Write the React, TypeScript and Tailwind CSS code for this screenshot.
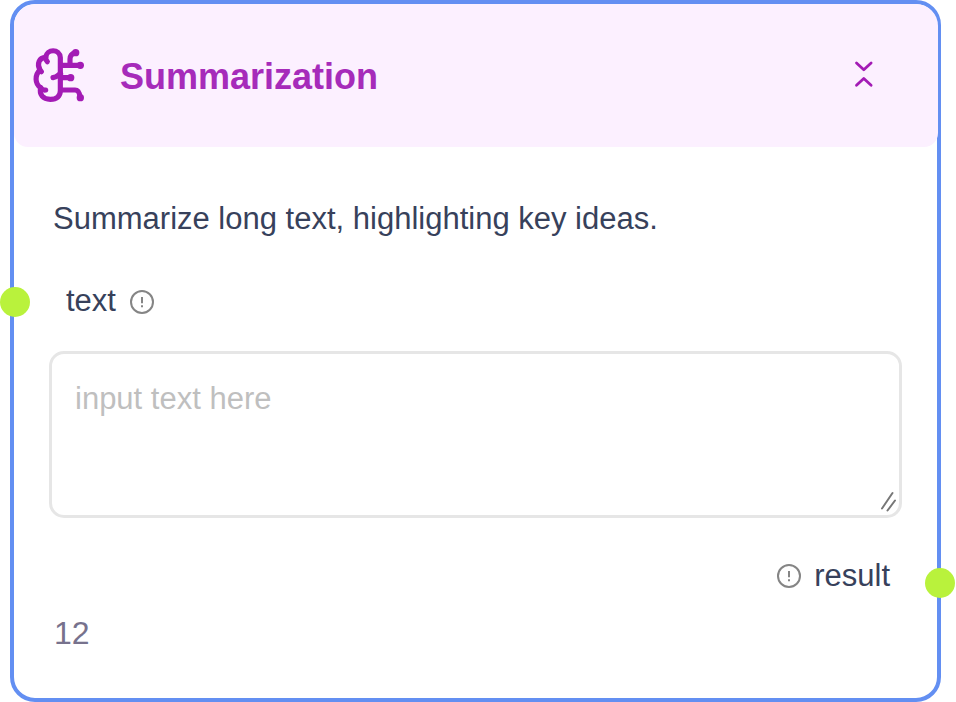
import React from "react";

function BrainIcon() {
  return (
    <svg width="54" height="58" viewBox="36 33 162 174" fill="none" stroke="#a31bb5" strokeWidth="15.5" strokeLinecap="round" strokeLinejoin="round" className="shrink-0">
      <path d="M121 65 C119 37 80 38 77 64 C57 65 50 83 60 102 C44 117 44 143 62 155 C57 176 69 190 91 190 C111 190 121 180 121 164 Z" />
      <path d="M77 62 C77 70 79 74 82 77 M60 102 L64 107 M62 155 C66 161 71 163 77 162" />
      <path d="M122 113 C116 114 113 123 99 125 M122 125 H151 M122 88 H181 M150 86 V69 C150 58 155 53 165 50 M122 162 H165 C174 162 178 167 180 183" />
      <g fill="#a31bb5" stroke="none">
        <circle cx="167" cy="50" r="11" />
        <circle cx="181" cy="88" r="11" />
        <circle cx="152" cy="125" r="11" />
        <circle cx="181" cy="185" r="11" />
      </g>
    </svg>
  );
}

function CollapseIcon() {
  return (
    <svg width="20" height="28" viewBox="0 0 20 28" fill="none" stroke="#a31bb5" strokeWidth="2.8" strokeLinecap="round" strokeLinejoin="round">
      <path d="M2.5 3 L9.8 9.7 L17.1 3 M2.5 25.2 L9.8 18.4 L17.1 25.2" />
    </svg>
  );
}

function InfoIcon() {
  return (
    <svg width="26" height="26" viewBox="0 0 26 26" fill="none" stroke="#858585" strokeWidth="2" className="shrink-0">
      <circle cx="13" cy="13" r="11" />
      <path d="M13 8 V14.2 M13 16.2 V18.2" />
    </svg>
  );
}

export default function App() {
  return (
    <div className="h-[702px] w-[956px] overflow-hidden bg-white pl-[10px] font-['Liberation_Sans',Arial,sans-serif] text-[#37415b]">
      <section className="relative h-[702px] w-[931px] rounded-[25px] border-4 border-[#638ff2] bg-white">
        <header className="flex h-[143px] w-[924px] items-start rounded-t-[22px] rounded-b-[14px] bg-[#fcf0ff] pl-[18px]">
          <div className="pt-[43px]"><BrainIcon /></div>
          <h2 className="ml-[34px] pt-[52px] text-[36px] leading-[42px] font-bold whitespace-nowrap text-[#a62bba]">Summarization</h2>
          <button aria-label="Collapse" className="mt-[56px] mr-[64px] ml-auto"><CollapseIcon /></button>
        </header>
        <div className="px-[35px]">
          <p className="pt-[54px] pl-1 text-[31px] leading-[36px] whitespace-nowrap">Summarize long text, highlighting key ideas.</p>
          <div className="mt-[46px] flex h-[36px] items-center gap-[13px] pl-[17px] text-[31px] leading-[36px]">
            <span>text</span>
            <span className="pt-[2px]"><InfoIcon /></span>
          </div>
          <div className="mt-[32px] flex h-[167px] w-[853px] items-start justify-between rounded-[15px] border-[3px] border-[#e6e6e6] pt-[27px] pl-[23px] text-[31px] leading-[36px] text-[#bfbfbf]">
            <span>input text here</span>
            <svg width="18" height="22" viewBox="0 0 18 22" className="mt-[109px] mr-[1px]" fill="none" stroke="#777777" strokeWidth="2" strokeLinecap="round">
              <path d="M2 18.5 L12.5 3 M7.5 20.5 L15 10.5" />
            </svg>
          </div>
          <div className="mt-[40px] flex h-[36px] items-center justify-end gap-3 pr-[12px] text-[31px] leading-[36px]">
            <InfoIcon />
            <span>result</span>
          </div>
          <p className="mt-[21px] pl-[5px] text-[32px] leading-[36px] text-[#77728d]">12</p>
        </div>
        <span className="absolute top-[283px] -left-[14px] size-[30px] rounded-full bg-[#b9f23c]" />
        <span className="absolute top-[564px] -right-[18px] size-[30px] rounded-full bg-[#b9f23c]" />
      </section>
    </div>
  );
}
